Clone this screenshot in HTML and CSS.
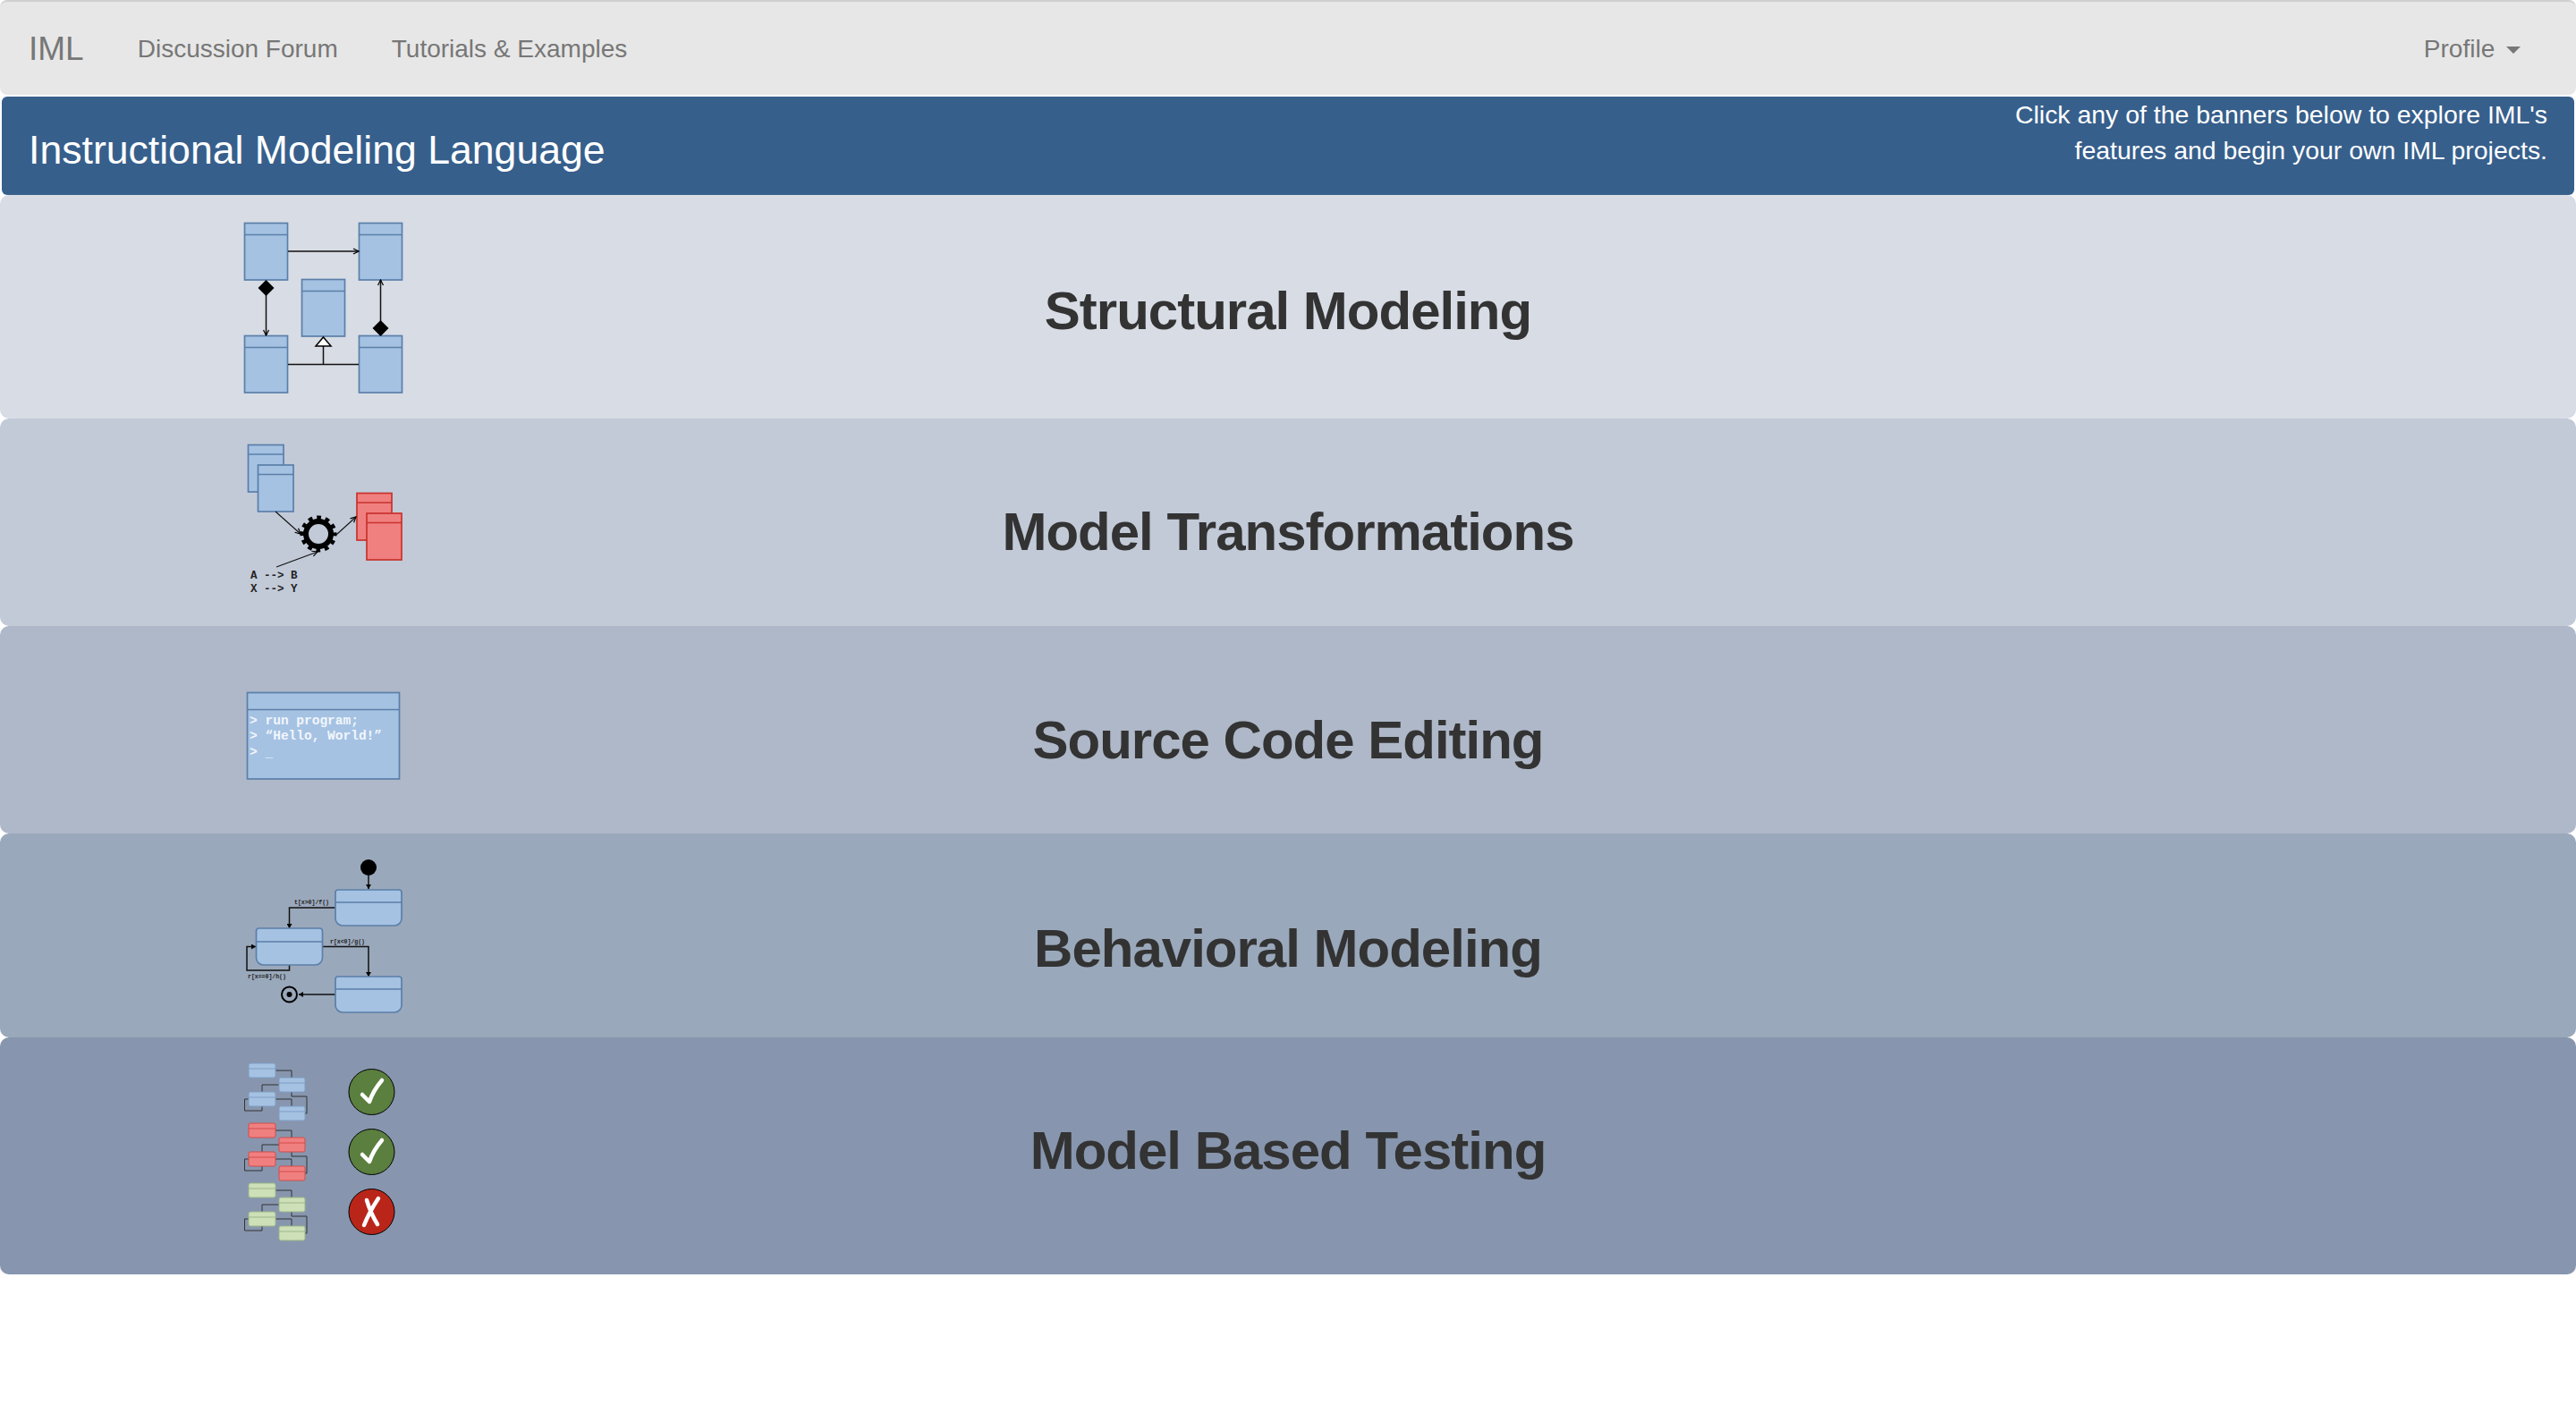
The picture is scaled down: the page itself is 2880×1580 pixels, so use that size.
FILE: index.html
```html
<!DOCTYPE html>
<html lang="en">
<head>
  <meta charset="UTF-8" />
  <title>IML</title>
  <link rel="stylesheet" href="styles.css">
</head>
<body>
  <!-- Top nav -->
  <nav class="navbar">
    <a class="brand" href="#">IML</a>
    <a class="nav-link" href="#">Discussion Forum</a>
    <a class="nav-link" href="#">Tutorials &amp; Examples</a>
    <a class="nav-link profile" href="#">Profile <span class="caret"></span></a>
  </nav>

  <header class="banner">
    <h2>Instructional Modeling Language</h2>
    <p>Click any of the banners below to explore IML's<br>features and begin your own IML projects.</p>
  </header>

  <svg class="defs" width="0" height="0">
    <defs>
      <marker id="arrow" markerWidth="8" markerHeight="8" refX="7" refY="4" orient="auto" markerUnits="userSpaceOnUse">
        <path d="M1 1 L7 4 L1 7" fill="none" stroke="#000" stroke-width="1.2"/>
      </marker>
      <marker id="tip" markerWidth="6" markerHeight="6" refX="5" refY="3" orient="auto" markerUnits="userSpaceOnUse">
        <path d="M0 0 L5 3 L0 6 Z" fill="#000"/>
      </marker>
      <g id="mini">
        <path class="mini-line" d="M58 27H76V35M62 43H43V51M58 59H76V67M76 51V56H93V75H91M28 59H23.5V72H43V67"/>
        <g class="mini-box">
          <rect x="28" y="19" width="30" height="16" rx="2"/><path d="M28 25H58"/>
          <rect x="62" y="35" width="29" height="16" rx="2"/><path d="M62 41H91"/>
          <rect x="28" y="51" width="30" height="16" rx="2"/><path d="M28 57H58"/>
          <rect x="62" y="67" width="29" height="16" rx="2"/><path d="M62 73H91"/>
        </g>
      </g>
    </defs>
  </svg>

  <main class="rows">
    <!-- Structural Modeling -->
    <a class="row row-structural" href="#">
      <svg class="icon" width="220" height="220" viewBox="0 0 220 220">
        <g class="box blue">
          <rect x="23.5" y="19.5" width="48" height="63.5"/><path d="M23.5 32.5H71.5"/>
          <rect x="151.5" y="19.5" width="48" height="63.5"/><path d="M151.5 32.5H199.5"/>
          <rect x="87.5" y="82.5" width="48" height="63.5"/><path d="M87.5 95.5H135.5"/>
          <rect x="23.5" y="145.5" width="48" height="63.5"/><path d="M23.5 158.5H71.5"/>
          <rect x="151.5" y="145.5" width="48" height="63.5"/><path d="M151.5 158.5H199.5"/>
        </g>
        <g class="wire">
          <path d="M72 51H151" marker-end="url(#arrow)"/>
          <path d="M47.5 100V145" marker-end="url(#arrow)"/>
          <path d="M175.5 129V83" marker-end="url(#arrow)"/>
          <path d="M72 177.500H151M111.500 177.500V156"/>
        </g>
        <path d="M47.500 83L56.500 92L47.500 101L38.500 92Z"/>
        <path d="M175.500 128L184.500 137L175.500 146L166.500 137Z"/>
        <path class="hollow" d="M111.500 147L120 157H103Z"/>
      </svg>
      <h1>Structural Modeling</h1>
    </a>

    <!-- Model Transformations -->
    <a class="row row-transform" href="#">
      <svg class="icon" width="220" height="190" viewBox="0 0 220 190">
        <g class="box blue">
          <rect x="27.500" y="17.500" width="39.500" height="52.500"/><path d="M27.500 28H67"/>
          <rect x="38.500" y="40" width="39.500" height="52"/><path d="M38.500 50.500H78"/>
        </g>
        <g class="box red">
          <rect x="149" y="71.500" width="39" height="52.500"/><path d="M149 82H188"/>
          <rect x="160" y="94" width="39" height="52"/><path d="M160 104.500H199"/>
        </g>
        <circle class="gear-teeth" cx="106" cy="117" r="17"/>
        <circle class="gear-ring" cx="106" cy="117" r="14"/>
        <g class="wire thin">
          <path d="M58 92L86 117" marker-end="url(#arrow)"/>
          <path d="M126 118L148 98" marker-end="url(#arrow)"/>
          <path d="M59 154L105 137" marker-end="url(#arrow)"/>
        </g>
        <text class="mono-label" x="30" y="167">A --&gt; B</text>
        <text class="mono-label" x="30" y="182">X --&gt; Y</text>
      </svg>
      <h1>Model Transformations</h1>
    </a>

    <!-- Source Code Editing -->
    <a class="row row-source" href="#">
      <svg class="icon" width="220" height="140" viewBox="0 0 220 140">
        <g class="box blue">
          <rect x="26.500" y="24.500" width="170" height="96.500"/><path d="M26.500 43.500H196.500"/>
        </g>
        <text class="term" x="29" y="60">&gt;</text><text class="term" x="46.500" y="60">run program;</text>
        <text class="term" x="29" y="77">&gt;</text><text class="term" x="46.500" y="77">“Hello, World!”</text>
        <text class="term" x="29" y="95">&gt;</text><text class="term" x="46.500" y="96">_</text>
      </svg>
      <h1>Source Code Editing</h1>
    </a>

    <!-- Behavioral Modeling -->
    <a class="row row-behavior" href="#">
      <svg class="icon" width="220" height="200" viewBox="0 0 220 200">
        <circle cx="162" cy="30" r="9"/>
        <g class="wire">
          <path d="M162 39V54" marker-end="url(#tip)"/>
          <path d="M125 75H73.500V98" marker-end="url(#tip)"/>
          <path d="M110.500 118.500H162V152" marker-end="url(#tip)"/>
          <path d="M73.500 139V145H26V118.500H36" marker-end="url(#tip)"/>
          <path d="M125 172H84" marker-end="url(#tip)"/>
        </g>
        <g class="box blue">
          <path d="M125 58a3 3 0 0 1 3-3h68a3 3 0 0 1 3 3v29a8 8 0 0 1-8 8h-58a8 8 0 0 1-8-8ZM125 69H199"/>
          <path d="M36.500 101a3 3 0 0 1 3-3h68a3 3 0 0 1 3 3v30a8 8 0 0 1-8 8h-58a8 8 0 0 1-8-8ZM36.500 113H110.500"/>
          <path d="M125 155a3 3 0 0 1 3-3h68a3 3 0 0 1 3 3v29a8 8 0 0 1-8 8h-58a8 8 0 0 1-8-8ZM125 166H199"/>
        </g>
        <circle class="end-ring" cx="73.500" cy="172" r="8.500"/>
        <circle cx="73.500" cy="172" r="3"/>
        <text class="state-label" x="79" y="71">t[x&gt;0]/f()</text>
        <text class="state-label" x="119" y="115">r[x&lt;0]/g()</text>
        <text class="state-label" x="27" y="154">r[x==0]/h()</text>
      </svg>
      <h1>Behavioral Modeling</h1>
    </a>

    <!-- Model Based Testing -->
    <a class="row row-testing" href="#">
      <svg class="icon" width="220" height="220" viewBox="0 0 220 220">
        <use href="#mini" class="mini blue"/>
        <use href="#mini" class="mini red" y="67"/>
        <use href="#mini" class="mini green" y="134"/>
        <circle class="pass" cx="165.500" cy="51" r="25.500"/>
        <path class="mark" d="M155 54L163 62C166 53 171 45 177 38"/>
        <circle class="pass" cx="165.500" cy="118" r="25.500"/>
        <path class="mark" d="M155 121L163 129C166 120 171 112 177 105"/>
        <circle class="fail" cx="165.500" cy="185" r="25.500"/>
        <path class="mark" d="M157 200C161 190 167 179 173 170M160 172C163 182 167 191 172 199"/>
      </svg>
      <h1>Model Based Testing</h1>
    </a>
  </main>
</body>
</html>
```

FILE: styles.css
```css
body {
  margin: 0;
  background-color: #fff;
  font-family: "Liberation Sans", Arial, sans-serif;
}

a {
  text-decoration: none;
}

.navbar {
  display: flex;
  align-items: center;
  height: 103px;
  padding-top: 1px;
  padding-left: 32px;
  background-color: #e7e7e7;
  border-top: 2px solid #d0d0d0;
  border-radius: 8px;
  margin-bottom: 2px;
}

.brand {
  font-size: 37px;
  color: #777;
  margin-right: 60px;
}

.nav-link {
  font-size: 28px;
  color: #777;
  margin-right: 60px;
}

.profile {
  margin-left: auto;
  margin-right: 62px;
}

.caret {
  display: inline-block;
  margin-left: 5px;
  vertical-align: middle;
  border-top: 8px solid #777;
  border-left: 8px solid transparent;
  border-right: 8px solid transparent;
}

.banner {
  display: flex;
  justify-content: space-between;
  height: 110px;
  margin: 0 2px;
  padding: 0 30px;
  background-color: #375f8c;
  border-radius: 6px;
  color: #fff;
}

.banner h2 {
  margin: 0;
  font-size: 44.6px;
  font-weight: normal;
  line-height: 119px;
}

.banner p {
  margin: 0;
  font-size: 28.45px;
  line-height: 40px;
  text-align: right;
}

.defs {
  display: block;
  height: 0;
}

.row {
  display: grid;
  grid-template-columns: 1fr auto 1fr;
  align-items: center;
  border-radius: 10px;
  color: #333;
}

.row h1 {
  margin: 0;
  font-size: 60px;
  font-weight: bold;
  letter-spacing: -1px;
  white-space: nowrap;
}

.icon {
  display: block;
  margin-left: 250px;
  align-self: start;
}

.row-structural { height: 250px; background-color: #d7dce5; }
.row-transform  { height: 232px; background-color: #c2cad8; }
.row-source     { height: 232px; background-color: #aeb8c8; }
.row-behavior   { height: 228px; background-color: #9aa8bb; }
.row-testing    { height: 265px; background-color: #8796ae; box-shadow: 0 2px 4px rgba(0, 0, 0, 0.05); }

.row-structural .icon { margin-top: 12px; }
.row-transform .icon  { margin-top: 12px; }
.row-source .icon     { margin-top: 50px; }
.row-behavior .icon   { margin-top: 8px; }
.row-testing .icon    { margin-top: 10px; }

.row-structural h1 { padding-top: 9px; }
.row-transform h1  { padding-top: 21px; }
.row-source h1     { padding-top: 23px; }
.row-behavior h1   { padding-top: 29px; }
.row-testing h1    { padding-bottom: 12px; }

/* svg parts */
.box rect, .box path {
  stroke-width: 1.7;
}

.blue rect, .blue path {
  fill: #a5c2e3;
  stroke: #5b7fa8;
}

.red rect, .red path {
  fill: #f08080;
  stroke: #c8322c;
}

.wire path {
  fill: none;
  stroke: #111;
  stroke-width: 1.5;
}

.wire.thin path {
  stroke-width: 1.1;
}

.hollow {
  fill: #fff;
  stroke: #000;
  stroke-width: 1.5;
}

.gear-teeth {
  fill: none;
  stroke: #000;
  stroke-width: 7;
  stroke-dasharray: 4.45 4.45;
  stroke-dashoffset: 2.2;
}

.gear-ring {
  fill: none;
  stroke: #000;
  stroke-width: 6;
}

.mono-label {
  font-family: "Liberation Mono", monospace;
  font-size: 12.5px;
  font-weight: bold;
  fill: #222;
}

.term {
  font-family: "Liberation Mono", monospace;
  font-size: 14.5px;
  font-weight: bold;
  fill: #f2f6fb;
}

.state-label {
  font-family: "Liberation Mono", monospace;
  font-size: 6.500px;
  font-weight: bold;
  fill: #222;
}

.end-ring {
  fill: none;
  stroke: #000;
  stroke-width: 2;
}

.mini-line {
  fill: none;
  stroke: #333;
  stroke-width: 1;
}

.mini {
  --mini-fill: #a5c2e3;
  --mini-stroke: #7f9dc4;
}

.mini.red {
  --mini-fill: #f08080;
  --mini-stroke: #d24d4b;
}

.mini.green {
  --mini-fill: #cde0b8;
  --mini-stroke: #9db58a;
}

.mini-box rect, .mini-box path {
  fill: var(--mini-fill);
  stroke: var(--mini-stroke);
  stroke-width: 1;
}

.pass, .fail {
  stroke: #000;
  stroke-width: 1;
}

.pass {
  fill: #5b7f3e;
}

.fail {
  fill: #b92619;
}

.mark {
  fill: none;
  stroke: #fff;
  stroke-width: 4.5;
  stroke-linecap: round;
  stroke-linejoin: round;
}
```
